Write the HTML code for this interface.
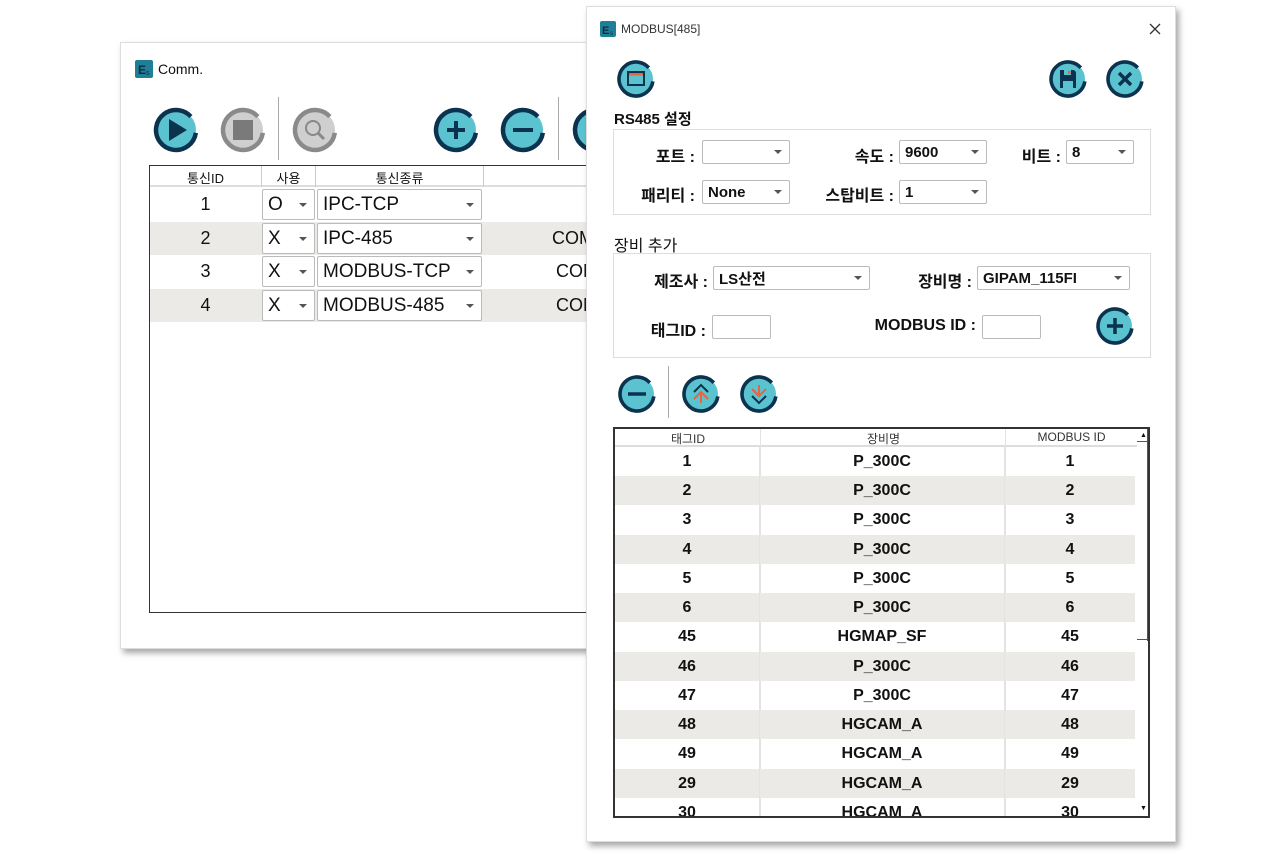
<!DOCTYPE html>
<html><head><meta charset="utf-8">
<style>
*{box-sizing:border-box;margin:0;padding:0}
body{width:1280px;height:854px;background:#fff;position:relative;overflow:hidden;font-family:"Liberation Sans","Noto Sans CJK KR",sans-serif;color:#111}
.abs{position:absolute}
.win{position:absolute;background:#fff;border:1px solid #ddd;box-shadow:3px 4px 6px rgba(0,0,0,.35)}
.combo{position:absolute;background:#fff;border:1px solid #bbb;border-radius:2px;font-size:15px;font-weight:bold;padding-left:5px;display:flex;align-items:center}
.combo::after{content:"";position:absolute;right:7px;top:50%;margin-top:-2px;border-left:4px solid transparent;border-right:4px solid transparent;border-top:4px solid #555}
.combo.noarr::after{display:none}
.lbl{position:absolute;font-size:16px;font-weight:bold;text-align:right;white-space:nowrap}
.grp{position:absolute;border:1px solid #ddd;background:#fff}
.ico{position:absolute}
.cell{position:absolute;text-align:center;font-size:16px;font-weight:bold;line-height:29px}
</style></head><body>

<!-- LEFT WINDOW -->
<div class="win" style="left:120px;top:42px;width:480px;height:607px;"></div>
<svg class="abs" style="left:135px;top:60px" width="18" height="18"><rect width="18" height="18" rx="2" fill="#1f7f96"/><text x="3" y="14" font-size="12" font-weight="bold" fill="#0b2c44" font-family="Liberation Sans">E</text><text x="11" y="15" font-size="7" fill="#0b2c44" font-family="Liberation Sans">s</text></svg>
<div class="abs" style="left:158px;top:61px;font-size:14px">Comm.</div>

<svg class="ico" style="left:152px;top:106px" width="48" height="48" viewBox="-24 -24 48 48"><circle r="20" fill="#5bc3cf"/><circle r="20" fill="none" stroke="#0b3350" stroke-width="4.5" stroke-dasharray="108 18" transform="rotate(8)"/><path d="M-7,-11 L11,0 L-7,11Z" fill="#0b3350"/></svg>
<svg class="ico" style="left:219px;top:106px" width="48" height="48" viewBox="-24 -24 48 48"><circle r="20" fill="#cfcfcf"/><circle r="20" fill="none" stroke="#8a8a8a" stroke-width="4.5" stroke-dasharray="108 18" transform="rotate(8)"/><rect x="-10" y="-10" width="20" height="20" fill="#7a7a7a"/></svg>
<div class="abs" style="left:278px;top:97px;width:1px;height:63px;background:#aaa"></div>
<svg class="ico" style="left:291px;top:106px" width="48" height="48" viewBox="-24 -24 48 48"><circle r="20" fill="#cfcfcf"/><circle r="20" fill="none" stroke="#8a8a8a" stroke-width="4.5" stroke-dasharray="108 18" transform="rotate(8)"/><circle cx="-2" cy="-2" r="7" fill="none" stroke="#888" stroke-width="2"/><path d="M3,3 L9,9" stroke="#888" stroke-width="3"/></svg>
<svg class="ico" style="left:432px;top:106px" width="48" height="48" viewBox="-24 -24 48 48"><circle r="20" fill="#5bc3cf"/><circle r="20" fill="none" stroke="#0b3350" stroke-width="4.5" stroke-dasharray="108 18" transform="rotate(8)"/><path d="M-9,0H9M0,-9V9" stroke="#0b3350" stroke-width="4"/></svg>
<svg class="ico" style="left:499px;top:106px" width="48" height="48" viewBox="-24 -24 48 48"><circle r="20" fill="#5bc3cf"/><circle r="20" fill="none" stroke="#0b3350" stroke-width="4.5" stroke-dasharray="108 18" transform="rotate(8)"/><path d="M-10,0H10" stroke="#0b3350" stroke-width="4"/></svg>
<div class="abs" style="left:558px;top:97px;width:1px;height:63px;background:#aaa"></div>
<svg class="ico" style="left:571px;top:106px" width="48" height="48" viewBox="-24 -24 48 48"><circle r="20" fill="#5bc3cf"/><circle r="20" fill="none" stroke="#0b3350" stroke-width="4.5"/></svg>

<!-- left table -->
<div class="abs" style="left:149px;top:165px;width:460px;height:448px;border:1px solid #333;background:#fff;border-right:none"></div>
<div class="abs" style="left:150px;top:166px;width:450px;height:21px;background:#fff;border-bottom:2px solid #ddd"></div>
<div class="abs" style="left:261px;top:166px;width:1px;height:21px;background:#ccc"></div>
<div class="abs" style="left:315px;top:166px;width:1px;height:21px;background:#ccc"></div>
<div class="abs" style="left:483px;top:166px;width:1px;height:21px;background:#ccc"></div>
<div class="abs" style="left:150px;top:168px;width:111px;text-align:center;font-size:13px">통신ID</div>
<div class="abs" style="left:262px;top:168px;width:53px;text-align:center;font-size:13px">사용</div>
<div class="abs" style="left:316px;top:168px;width:167px;text-align:center;font-size:13px">통신종류</div>

<div class="abs" style="left:150px;top:222px;width:450px;height:33px;background:#ebeae6"></div>
<div class="abs" style="left:150px;top:289px;width:450px;height:33px;background:#ebeae6"></div>

<div class="abs" style="left:150px;top:194px;width:111px;text-align:center;font-size:18px">1</div>
<div class="abs" style="left:150px;top:228px;width:111px;text-align:center;font-size:18px">2</div>
<div class="abs" style="left:150px;top:261px;width:111px;text-align:center;font-size:18px">3</div>
<div class="abs" style="left:150px;top:295px;width:111px;text-align:center;font-size:18px">4</div>

<div class="combo" style="left:262px;top:189px;width:53px;height:31px;font-weight:normal;font-size:19px">O</div>
<div class="combo" style="left:262px;top:223px;width:53px;height:31px;font-weight:normal;font-size:19px">X</div>
<div class="combo" style="left:262px;top:256px;width:53px;height:31px;font-weight:normal;font-size:19px">X</div>
<div class="combo" style="left:262px;top:290px;width:53px;height:31px;font-weight:normal;font-size:19px">X</div>
<div class="combo" style="left:317px;top:189px;width:165px;height:31px;font-weight:normal;font-size:19px">IPC-TCP</div>
<div class="combo" style="left:317px;top:223px;width:165px;height:31px;font-weight:normal;font-size:19px">IPC-485</div>
<div class="combo" style="left:317px;top:256px;width:165px;height:31px;font-weight:normal;font-size:19px">MODBUS-TCP</div>
<div class="combo" style="left:317px;top:290px;width:165px;height:31px;font-weight:normal;font-size:19px">MODBUS-485</div>
<div class="abs" style="left:552px;top:228px;font-size:18px">COM</div>
<div class="abs" style="left:556px;top:261px;font-size:18px">COM</div>
<div class="abs" style="left:556px;top:295px;font-size:18px">COM</div>

<!-- RIGHT WINDOW -->
<div class="win" style="left:586px;top:6px;width:590px;height:836px;"></div>
<svg class="abs" style="left:600px;top:21px" width="16" height="16"><rect width="16" height="16" rx="2" fill="#1f7f96"/><text x="2" y="13" font-size="11" font-weight="bold" fill="#0b2c44" font-family="Liberation Sans">E</text><text x="10" y="14" font-size="6" fill="#0b2c44" font-family="Liberation Sans">s</text></svg>
<div class="abs" style="left:621px;top:22px;font-size:12px;color:#333">MODBUS[485]</div>
<svg class="abs" style="left:1149px;top:23px" width="12" height="12"><path d="M1,1L11,11M11,1L1,11" stroke="#333" stroke-width="1.3"/></svg>

<svg class="ico" style="left:616px;top:59px" width="40" height="40" viewBox="-20 -20 40 40"><circle r="17" fill="#5bc3cf"/><circle r="17" fill="none" stroke="#0b3350" stroke-width="3.6" stroke-dasharray="92 15" transform="rotate(8)"/><rect x="-8" y="-7" width="16" height="13" fill="none" stroke="#0b3350" stroke-width="2"/><rect x="-7" y="-6" width="14" height="2.5" fill="#e8643c"/></svg>
<svg class="ico" style="left:1048px;top:59px" width="40" height="40" viewBox="-20 -20 40 40"><circle r="17" fill="#5bc3cf"/><circle r="17" fill="none" stroke="#0b3350" stroke-width="3.6" stroke-dasharray="92 15" transform="rotate(8)"/><path d="M-8,-9H6L8,-7V9H-8Z" fill="#0b3350"/><rect x="-4" y="-9" width="7" height="5" fill="#5bc3cf"/><rect x="0" y="-8" width="2.5" height="3" fill="#e8643c"/><rect x="-5" y="2" width="10" height="7" fill="#5bc3cf"/></svg>
<svg class="ico" style="left:1105px;top:59px" width="40" height="40" viewBox="-20 -20 40 40"><circle r="17" fill="#5bc3cf"/><circle r="17" fill="none" stroke="#0b3350" stroke-width="3.6" stroke-dasharray="92 15" transform="rotate(8)"/><path d="M-6,-6L6,6M6,-6L-6,6" stroke="#0b3350" stroke-width="3.5"/></svg>

<div class="abs" style="left:614px;top:108px;font-size:15px;font-weight:bold">RS485 설정</div>
<div class="grp" style="left:613px;top:129px;width:538px;height:86px"></div>
<div class="lbl" style="left:620px;top:143px;width:75px">포트 :</div>
<div class="combo" style="left:702px;top:140px;width:88px;height:24px"></div>
<div class="lbl" style="left:800px;top:143px;width:94px">속도 :</div>
<div class="combo" style="left:899px;top:140px;width:88px;height:24px">9600</div>
<div class="lbl" style="left:990px;top:143px;width:71px">비트 :</div>
<div class="combo" style="left:1066px;top:140px;width:68px;height:24px">8</div>
<div class="lbl" style="left:620px;top:182px;width:75px">패리티 :</div>
<div class="combo" style="left:702px;top:180px;width:88px;height:24px">None</div>
<div class="lbl" style="left:800px;top:182px;width:94px">스탑비트 :</div>
<div class="combo" style="left:899px;top:180px;width:88px;height:24px">1</div>

<div class="abs" style="left:614px;top:232px;font-size:16px">장비 추가</div>
<div class="grp" style="left:613px;top:253px;width:538px;height:105px"></div>
<div class="lbl" style="left:620px;top:268px;width:88px">제조사 :</div>
<div class="combo" style="left:713px;top:266px;width:157px;height:24px">LS산전</div>
<div class="lbl" style="left:880px;top:268px;width:92px">장비명 :</div>
<div class="combo" style="left:977px;top:266px;width:153px;height:24px">GIPAM_115FI</div>
<div class="lbl" style="left:620px;top:317px;width:86px">태그ID :</div>
<div class="combo noarr" style="left:712px;top:315px;width:59px;height:24px"></div>
<div class="lbl" style="left:840px;top:317px;width:136px">MODBUS ID :</div>
<div class="combo noarr" style="left:982px;top:315px;width:59px;height:24px"></div>
<svg class="ico" style="left:1095px;top:306px" width="40" height="40" viewBox="-20 -20 40 40"><circle r="17" fill="#5bc3cf"/><circle r="17" fill="none" stroke="#0b3350" stroke-width="3.6" stroke-dasharray="92 15" transform="rotate(8)"/><path d="M-8,0H8M0,-8V8" stroke="#0b3350" stroke-width="3.5"/></svg>

<svg class="ico" style="left:617px;top:374px" width="40" height="40" viewBox="-20 -20 40 40"><circle r="17" fill="#5bc3cf"/><circle r="17" fill="none" stroke="#0b3350" stroke-width="3.6" stroke-dasharray="92 15" transform="rotate(8)"/><path d="M-9,0H9" stroke="#0b3350" stroke-width="3.5"/></svg>
<div class="abs" style="left:668px;top:366px;width:1px;height:52px;background:#aaa"></div>
<svg class="ico" style="left:681px;top:374px" width="40" height="40" viewBox="-20 -20 40 40"><circle r="17" fill="#5bc3cf"/><circle r="17" fill="none" stroke="#0b3350" stroke-width="3.6" stroke-dasharray="92 15" transform="rotate(8)"/><path d="M-7,-2L0,-9L7,-2" fill="none" stroke="#0b3350" stroke-width="2"/><path d="M-7,5L0,-2L7,5" fill="none" stroke="#e8643c" stroke-width="2"/><path d="M0,-2V9" stroke="#e8643c" stroke-width="2"/></svg>
<svg class="ico" style="left:739px;top:374px" width="40" height="40" viewBox="-20 -20 40 40"><circle r="17" fill="#5bc3cf"/><circle r="17" fill="none" stroke="#0b3350" stroke-width="3.6" stroke-dasharray="92 15" transform="rotate(8)"/><path d="M-7,-5L0,2L7,-5" fill="none" stroke="#e8643c" stroke-width="2"/><path d="M0,-9V2" stroke="#e8643c" stroke-width="2"/><path d="M-7,2L0,9L7,2" fill="none" stroke="#0b3350" stroke-width="2"/></svg>

<!-- right table -->
<div class="abs" style="left:613px;top:427px;width:537px;height:391px;border:2px solid #333;background:#fff;overflow:hidden">
  <div class="abs" style="left:0;top:0;width:522px;height:18px;border-bottom:2px solid #ddd"></div>
  <div class="abs" style="left:0;top:1px;width:146px;text-align:center;font-size:12px;color:#333">태그ID</div>
  <div class="abs" style="left:146px;top:1px;width:245px;text-align:center;font-size:12px;color:#333">장비명</div>
  <div class="abs" style="left:391px;top:1px;width:131px;text-align:center;font-size:12px;color:#333">MODBUS ID</div>
  <div class="abs" style="left:145px;top:0;width:1px;height:391px;background:#e3e3e3"></div>
  <div class="abs" style="left:390px;top:0;width:1px;height:391px;background:#e3e3e3"></div>
  <div class="abs" style="left:532px;top:0;width:2px;height:212px;background:#555"></div>
  <div class="abs" style="left:522px;top:210px;width:12px;height:1px;background:#555"></div>
  <div class="abs" style="left:522px;top:12px;width:12px;height:1px;background:#555"></div>
  <div class="abs" style="left:525px;top:3px;font-size:7px">▲</div>
  <div class="abs" style="left:525px;top:376px;font-size:7px">▼</div>
</div>
<div class="abs" style="left:615px;top:447px;width:520px;height:369px;overflow:hidden">
<div class="abs" style="left:0;top:29px;width:520px;height:29px;background:#ebeae6"></div>
<div class="abs" style="left:0;top:88px;width:520px;height:29px;background:#ebeae6"></div>
<div class="abs" style="left:0;top:146px;width:520px;height:29px;background:#ebeae6"></div>
<div class="abs" style="left:0;top:205px;width:520px;height:29px;background:#ebeae6"></div>
<div class="abs" style="left:0;top:263px;width:520px;height:29px;background:#ebeae6"></div>
<div class="abs" style="left:0;top:322px;width:520px;height:29px;background:#ebeae6"></div>
<div class="abs" style="left:144px;top:0;width:1px;height:369px;background:#e3e3e3"></div>
<div class="abs" style="left:389px;top:0;width:1px;height:369px;background:#e3e3e3"></div>

<div class="cell" style="left:0;top:0;width:144px">1</div><div class="cell" style="left:145px;top:0;width:244px">P_300C</div><div class="cell" style="left:390px;top:0;width:130px">1</div>
<div class="cell" style="left:0;top:29px;width:144px">2</div><div class="cell" style="left:145px;top:29px;width:244px">P_300C</div><div class="cell" style="left:390px;top:29px;width:130px">2</div>
<div class="cell" style="left:0;top:58px;width:144px">3</div><div class="cell" style="left:145px;top:58px;width:244px">P_300C</div><div class="cell" style="left:390px;top:58px;width:130px">3</div>
<div class="cell" style="left:0;top:88px;width:144px">4</div><div class="cell" style="left:145px;top:88px;width:244px">P_300C</div><div class="cell" style="left:390px;top:88px;width:130px">4</div>
<div class="cell" style="left:0;top:117px;width:144px">5</div><div class="cell" style="left:145px;top:117px;width:244px">P_300C</div><div class="cell" style="left:390px;top:117px;width:130px">5</div>
<div class="cell" style="left:0;top:146px;width:144px">6</div><div class="cell" style="left:145px;top:146px;width:244px">P_300C</div><div class="cell" style="left:390px;top:146px;width:130px">6</div>
<div class="cell" style="left:0;top:175px;width:144px">45</div><div class="cell" style="left:145px;top:175px;width:244px">HGMAP_SF</div><div class="cell" style="left:390px;top:175px;width:130px">45</div>
<div class="cell" style="left:0;top:205px;width:144px">46</div><div class="cell" style="left:145px;top:205px;width:244px">P_300C</div><div class="cell" style="left:390px;top:205px;width:130px">46</div>
<div class="cell" style="left:0;top:234px;width:144px">47</div><div class="cell" style="left:145px;top:234px;width:244px">P_300C</div><div class="cell" style="left:390px;top:234px;width:130px">47</div>
<div class="cell" style="left:0;top:263px;width:144px">48</div><div class="cell" style="left:145px;top:263px;width:244px">HGCAM_A</div><div class="cell" style="left:390px;top:263px;width:130px">48</div>
<div class="cell" style="left:0;top:292px;width:144px">49</div><div class="cell" style="left:145px;top:292px;width:244px">HGCAM_A</div><div class="cell" style="left:390px;top:292px;width:130px">49</div>
<div class="cell" style="left:0;top:322px;width:144px">29</div><div class="cell" style="left:145px;top:322px;width:244px">HGCAM_A</div><div class="cell" style="left:390px;top:322px;width:130px">29</div>
<div class="cell" style="left:0;top:351px;width:144px">30</div><div class="cell" style="left:145px;top:351px;width:244px">HGCAM_A</div><div class="cell" style="left:390px;top:351px;width:130px">30</div>
</div>

</body></html>
